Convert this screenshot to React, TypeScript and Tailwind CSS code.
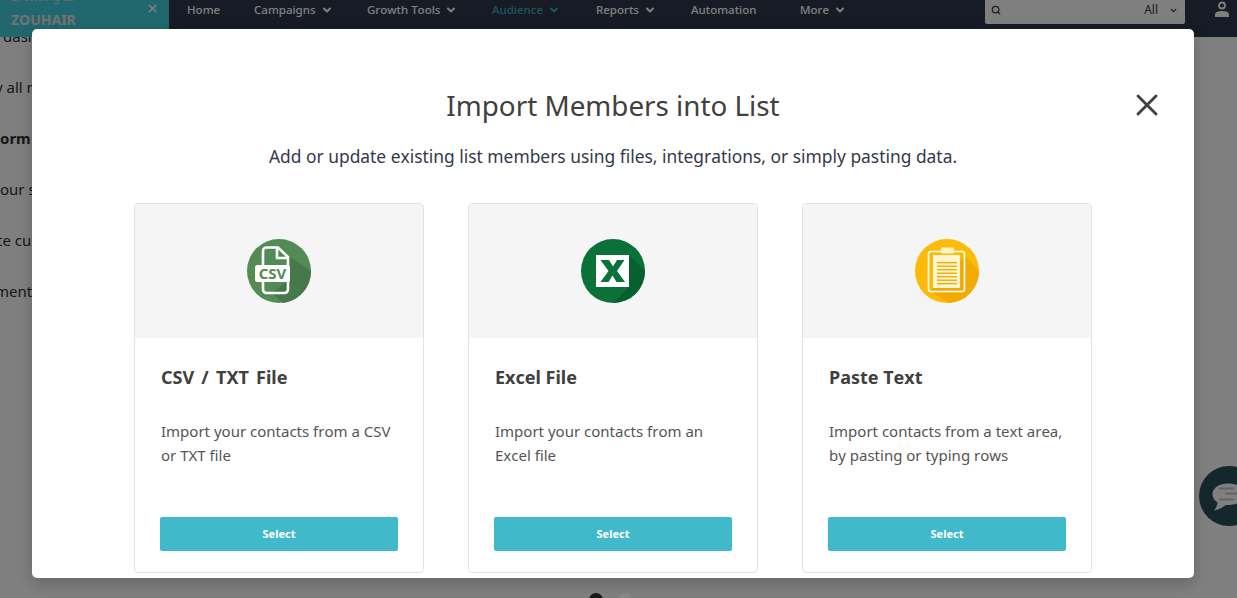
import { ChevronDown, Search, X } from "lucide-react"

const font = "font-['Noto_Sans',sans-serif] [font-kerning:none]"

const navItems = [
  { label: "Home", width: "w-[67px]" },
  { label: "Campaigns", caret: true, width: "w-[113px]" },
  { label: "Growth Tools", caret: true, width: "w-[125px]" },
  { label: "Audience", caret: true, active: true, width: "w-[104px]" },
  { label: "Reports", caret: true, width: "w-[95px]" },
  { label: "Automation", width: "w-[109px]" },
  { label: "More", caret: true, width: "w-[70px]" },
]

const backgroundLines = [
  { text: "dashboard", offset: "ml-[3px]" },
  { text: "y all members", offset: "-ml-[5px]" },
  { text: "orm builder", bold: true, offset: "" },
  { text: "our segments", offset: "" },
  { text: "te custom", offset: "-ml-[3px]" },
  { text: "ments", offset: "-ml-[5px]" },
]

function CsvIcon() {
  return (
    <svg viewBox="0 0 64 64" className="h-16 w-16">
      <circle cx="32" cy="32" r="32" fill="#548b54" />
      <path d="M25 54 L40 42 V16 L64 32 A32 32 0 0 1 36 64 Z" fill="#47784a" />
      <path d="M16 26 V12 Q16 8.500 20 8.500 H31 L41 18 V50 Q41 54 37 54 H20 Q16 54 16 50 V43" fill="none" stroke="#fff" strokeWidth="2.600" />
      <path d="M30 9 V19 H41" fill="none" stroke="#fff" strokeWidth="2.600" />
      <rect x="8" y="26" width="35" height="17" rx="2.500" fill="#fff" />
      <text x="25.500" y="40" textAnchor="middle" fill="#548b54" className="font-['Noto_Sans',sans-serif] text-[15px] font-bold">
        CSV
      </text>
    </svg>
  )
}

function ExcelIcon() {
  return (
    <svg viewBox="0 0 64 64" className="h-16 w-16">
      <circle cx="32" cy="32" r="32" fill="#0a7139" />
      <path d="M48 16 V48 L32 64 A32 32 0 0 0 64 32 Z" fill="#06602f" />
      <rect x="15" y="16" width="33" height="32" fill="#fff" />
      <path d="M19.500 21 H28 L32 27.500 L36 21 H43.500 L36 32 L44 43 H35.500 L31.500 36.500 L27.500 43 H19.500 L27.500 32 Z" fill="#0a7139" />
    </svg>
  )
}

function PasteIcon() {
  return (
    <svg viewBox="0 0 64 64" className="h-16 w-16">
      <circle cx="32" cy="32" r="32" fill="#fdbb09" />
      <path d="M50 17 L64 32 A32 32 0 0 1 34 64 L15 52 Z" fill="#f3ab04" />
      <rect x="13.500" y="12.500" width="36" height="40" rx="2.500" fill="none" stroke="#fff" strokeWidth="1.600" />
      <rect x="18" y="16" width="27" height="33" rx="1" fill="#fff6cf" />
      <rect x="26" y="8.500" width="13" height="6" rx="1" fill="#fff3c0" />
      {[23, 26.500, 30, 33.500, 37, 40.500, 44].map((y) => (
        <rect key={y} x="22" y={y} width="20" height="1.400" fill="#f3ab04" />
      ))}
    </svg>
  )
}

const cards = [
  { title: "CSV / TXT File", titleClass: "[word-spacing:2.500px]", description: "Import your contacts from a CSV or TXT file", icon: CsvIcon },
  { title: "Excel File", titleClass: "", description: "Import your contacts from an Excel file", icon: ExcelIcon },
  { title: "Paste Text", titleClass: "", description: "Import contacts from a text area, by pasting or typing rows", icon: PasteIcon },
]

export default function App() {
  return (
    <div className={`relative h-[598px] w-[1237px] overflow-hidden bg-white ${font}`}>
      {/* page behind the modal */}
      <header className="flex h-[37px] items-stretch bg-[#2d374d]">
        <div className="relative w-[169px] bg-[#42d0dc] pl-[11px]">
          <p className="absolute -top-[11px] left-[11px] text-[11px] text-[#d8d8d8]">Browsing as</p>
          <p className="pt-[9px] text-[14px] font-bold text-[#e5e5e5]">ZOUHAIR</p>
          <X className="absolute right-[10px] top-[2px] h-[13px] w-[13px] text-white" strokeWidth={3} />
        </div>
        <nav className="flex h-[20px] items-center pl-[18px] text-[11.5px] font-medium text-white">
          {navItems.map((item) => (
            <div key={item.label} className={`flex items-center gap-[5px] ${item.width} ${item.active ? "text-[#3da8b8]" : ""}`}>
              {item.label}
              {item.caret && <ChevronDown className="h-[12px] w-[12px]" strokeWidth={4} />}
            </div>
          ))}
        </nav>
        <div className="ml-auto flex h-[24px] w-[200px] items-center rounded-b-[2px] bg-white pb-[4px] pl-[6px] pr-[7px] text-[12px] text-[#3a3a3a]">
          <Search className="h-[10px] w-[10px]" strokeWidth={3} />
          <span className="ml-auto">All</span>
          <ChevronDown className="ml-[11px] h-[9px] w-[9px]" strokeWidth={3.5} />
        </div>
        <div className="flex w-[52px] items-start justify-end pr-[6px] pt-[1px]">
          <svg viewBox="0 0 18 18" className="h-[18px] w-[18px] text-white">
            <circle cx="9" cy="4.500" r="3" fill="none" stroke="currentColor" strokeWidth="1.800" />
            <path d="M2 16 V13.500 Q2 10 9 10 Q16 10 16 13.500 V16 Z" fill="currentColor" />
          </svg>
        </div>
      </header>
      <div className="-mt-px text-[15px] text-[#2f2f2f]">
        {backgroundLines.map((line) => (
          <p key={line.text} className={`h-[51px] whitespace-nowrap leading-[0px] ${line.offset} ${line.bold ? "font-bold" : ""}`}>
            {line.text}
          </p>
        ))}
      </div>
      <div className="absolute left-[1199px] top-[466px] h-[60px] w-[60px] rounded-full bg-[#2a4e54] pl-[13px] pt-[17px]">
        <svg viewBox="0 0 36 28" className="h-[28px] w-[36px]">
          <path d="M16 0.500 C7 0.500 0.500 5 0.500 11 C0.500 15 3 18 5.500 19.500 C5.500 22 4 25 2 27.500 C7 26.500 11 24 14 22 C24 22 34 18.500 34 11 C34 5 25 0.500 16 0.500 Z" fill="#fff" />
          <rect x="7" y="4.500" width="15" height="2" fill="#c8c8c8" />
          <rect x="13" y="9.500" width="20" height="2" fill="#c8c8c8" />
          <rect x="7" y="15.500" width="15" height="2" fill="#c8c8c8" />
        </svg>
      </div>

      {/* overlay + modal */}
      <div className="absolute inset-0 bg-black/50 pl-[32px] pt-[29px]">
        <div className="relative h-[549px] w-[1162px] rounded-[5px] bg-white shadow-[0_5px_15px_rgba(0,0,0,0.2)]">
          <h1 className="pt-[57px] text-center text-[27.8px] leading-[38px] text-[#404040]">Import Members into List</h1>
          <p className="mt-[20px] text-center text-[17.4px] leading-[24px] text-[#33394a]">
            Add or update existing list members using files, integrations, or simply pasting data.
          </p>
          <button className="absolute left-[1097px] top-[58px] text-[#404040]">
            <X className="h-[36px] w-[36px]" strokeWidth={1.9} />
          </button>
          <div className="mt-[35px] flex gap-[44px] pl-[102px]">
            {cards.map((card) => {
              const Icon = card.icon
              return (
                <div key={card.title} className="h-[370px] w-[290px] overflow-hidden rounded-[4px] border border-[#e3e3e3] bg-white">
                  <div className="flex h-[134px] items-center justify-center bg-[#f5f5f5]">
                    <Icon />
                  </div>
                  <div className="px-[25px]">
                    <h3 className={`mt-[26px] pl-px text-[18px] font-bold leading-[27px] text-[#404040] ${card.titleClass}`}>{card.title}</h3>
                    <p className="mt-[28px] h-[48px] pl-px text-[15px] leading-[24px] text-[#555]">{card.description}</p>
                    <button className="mt-[50px] h-[34px] w-[238px] rounded-[2px] bg-[#40bacb] text-[11px] font-bold text-white">Select</button>
                  </div>
                </div>
              )
            })}
          </div>
        </div>
        <div className="absolute bottom-[-9px] left-[589px] flex gap-[15px]">
          <span className="h-[14px] w-[14px] rounded-full bg-[#1a1a1a]" />
          <span className="h-[14px] w-[14px] rounded-full bg-[#868686]" />
        </div>
      </div>
    </div>
  )
}
